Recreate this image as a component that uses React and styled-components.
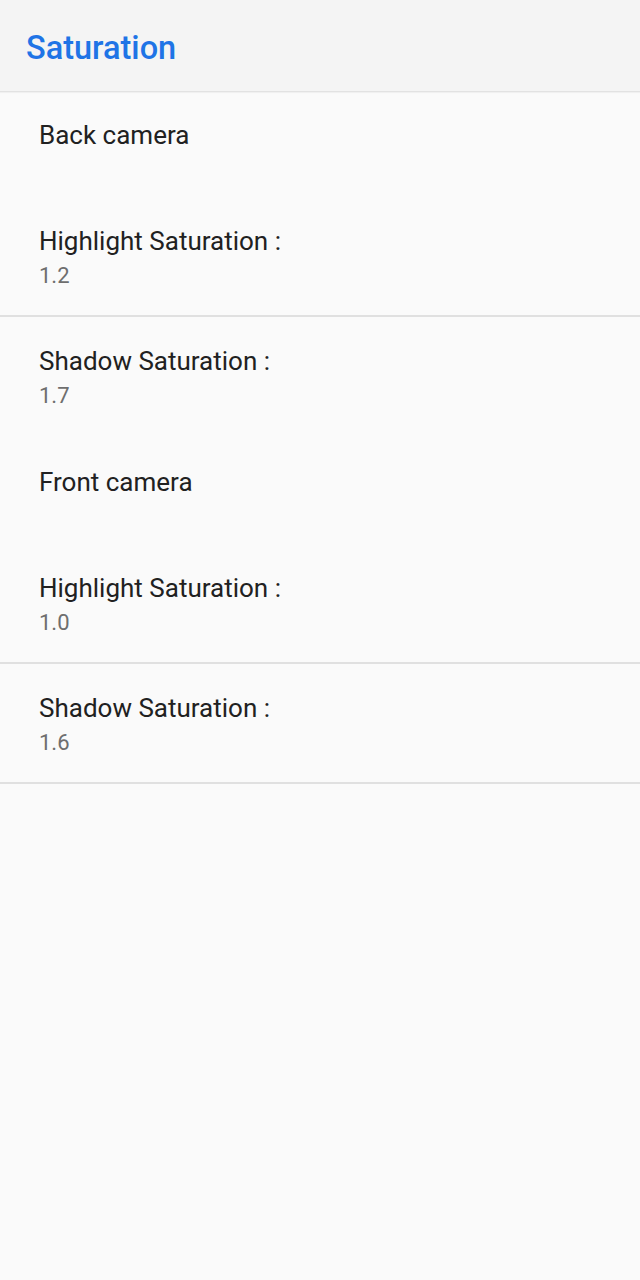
import React from "react";
import styled, { createGlobalStyle } from "styled-components";

const Global = createGlobalStyle`
  html, body { margin: 0; padding: 0; background: #fafafa; }
  body { font-family: Roboto, "Noto Sans", sans-serif; -webkit-font-smoothing: antialiased; }
`;

const Page = styled.div`
  width: 640px;
  min-height: 1280px;
  background: #fafafa;
  display: flex;
  flex-direction: column;
`;

const Toolbar = styled.header`
  position: relative;
  z-index: 1;
  height: 91px;
  box-sizing: border-box;
  padding: 28px 0 0 26px;
  background: #f4f4f4;
  box-shadow: 0 1px 0 #e2e2e2, 0 2px 1px rgba(0, 0, 0, 0.04);
`;

const Title = styled.h1`
  margin: 0;
  font-size: 32.5px;
  line-height: 40px;
  font-weight: 500;
  color: #1f74e6;
`;

const List = styled.div`
  display: flex;
  flex-direction: column;
  padding-top: 1px;
`;

const Category = styled.div`
  height: 105px;
  margin-top: ${(p) => (p.$first ? "0" : "2px")};
  box-sizing: border-box;
  padding: 28px 0 0 39px;
  font-size: 26px;
  line-height: 30px;
  color: #212121;
`;

const Item = styled.div`
  height: 118px;
  box-sizing: border-box;
  padding: 29px 0 0 39px;
  display: flex;
  flex-direction: column;
`;

const ItemTitle = styled.div`
  font-size: 26px;
  line-height: 30px;
  color: #212121;
`;

const ItemValue = styled.div`
  margin-top: 7px;
  font-size: 22px;
  line-height: 26px;
  color: #6e6e6e;
`;

const Divider = styled.div`
  height: 2px;
  background: ${(p) => (p.$hidden ? "transparent" : "#e0e0e0")};
`;

const groups = [
  {
    name: "Back camera",
    items: [
      { title: "Highlight Saturation :", value: "1.2" },
      { title: "Shadow Saturation :", value: "1.7" },
    ],
  },
  {
    name: "Front camera",
    items: [
      { title: "Highlight Saturation :", value: "1.0" },
      { title: "Shadow Saturation :", value: "1.6" },
    ],
  },
];

export default function App() {
  return (
    <Page>
      <Global />
      <Toolbar>
        <Title>Saturation</Title>
      </Toolbar>
      <List>
        {groups.map((g, gi) => (
          <React.Fragment key={g.name}>
            <Category $first={gi === 0}>{g.name}</Category>
            {g.items.map((it, ii) => {
              const lastInGroup = ii === g.items.length - 1;
              const hidden = lastInGroup && gi < groups.length - 1;
              return (
                <React.Fragment key={it.title}>
                  <Item>
                    <ItemTitle>{it.title}</ItemTitle>
                    <ItemValue>{it.value}</ItemValue>
                  </Item>
                  <Divider $hidden={hidden} />
                </React.Fragment>
              );
            })}
          </React.Fragment>
        ))}
      </List>
    </Page>
  );
}
